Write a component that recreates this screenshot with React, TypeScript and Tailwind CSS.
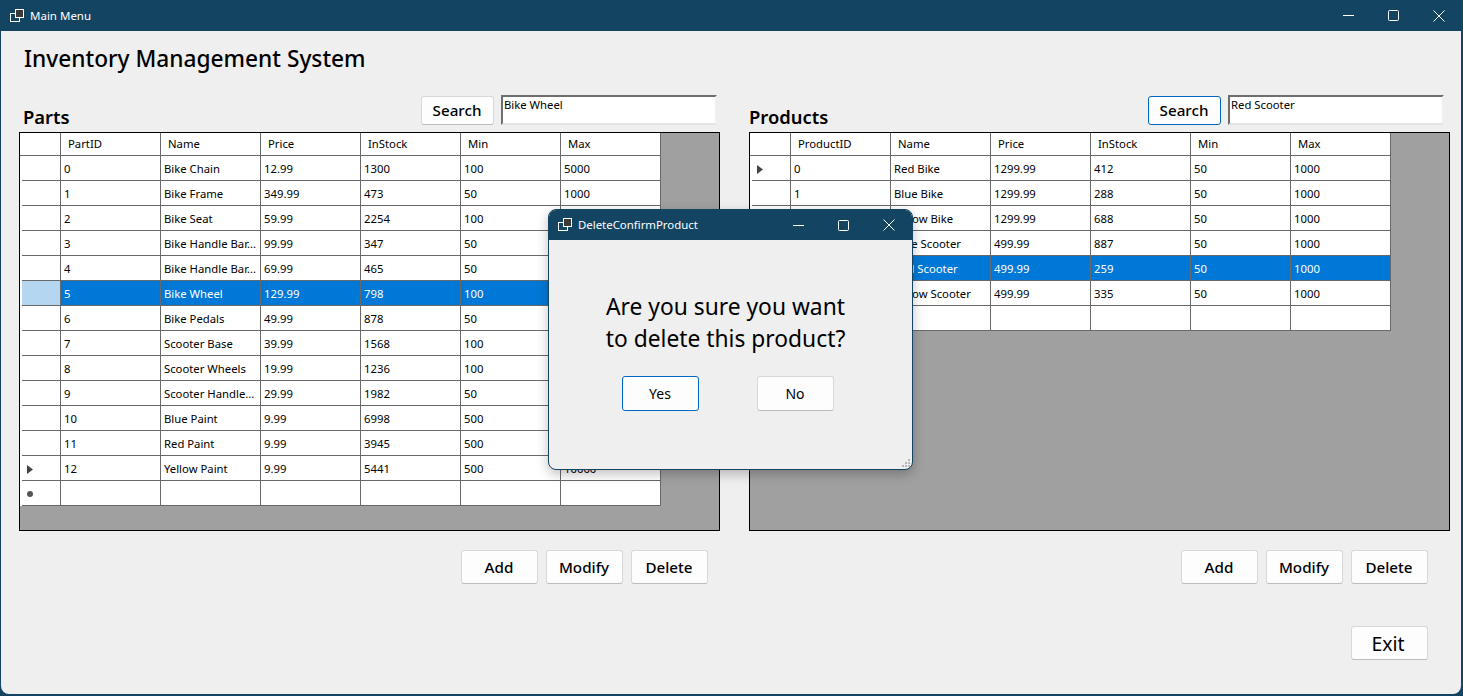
type Row = string[];

const partRows: Row[] = [
    ['0', 'Bike Chain', '12.99', '1300', '100', '5000'],
    ['1', 'Bike Frame', '349.99', '473', '50', '1000'],
    ['2', 'Bike Seat', '59.99', '2254', '100', '5000'],
    ['3', 'Bike Handle Bar...', '99.99', '347', '50', '1000'],
    ['4', 'Bike Handle Bar...', '69.99', '465', '50', '1000'],
    ['5', 'Bike Wheel', '129.99', '798', '100', '5000'],
    ['6', 'Bike Pedals', '49.99', '878', '50', '1000'],
    ['7', 'Scooter Base', '39.99', '1568', '100', '5000'],
    ['8', 'Scooter Wheels', '19.99', '1236', '100', '5000'],
    ['9', 'Scooter Handle...', '29.99', '1982', '50', '1000'],
    ['10', 'Blue Paint', '9.99', '6998', '500', '10000'],
    ['11', 'Red Paint', '9.99', '3945', '500', '10000'],
    ['12', 'Yellow Paint', '9.99', '5441', '500', '10000'],
];

const productRows: Row[] = [
    ['0', 'Red Bike', '1299.99', '412', '50', '1000'],
    ['1', 'Blue Bike', '1299.99', '288', '50', '1000'],
    ['2', 'Yellow Bike', '1299.99', '688', '50', '1000'],
    ['3', 'Blue Scooter', '499.99', '887', '50', '1000'],
    ['4', 'Red Scooter', '499.99', '259', '50', '1000'],
    ['5', 'Yellow Scooter', '499.99', '335', '50', '1000'],
];

function WindowIcon() {
    return (
        <svg width="16" height="16" viewBox="0 0 16 16" fill="none" stroke="white" strokeWidth="1" className="shrink-0">
            <rect x="0.5" y="5.5" width="9" height="8" />
            <rect x="5.5" y="1.5" width="8" height="8" fill="#3a3a3a" />
        </svg>
    );
}

function WindowControls() {
    return (
        <div className="ml-auto flex items-center">
            <div className="flex w-[45px] justify-center">
                <svg width="11" height="11" viewBox="0 0 11 11" stroke="white" fill="none">
                    <path d="M0 5.5H11" />
                </svg>
            </div>
            <div className="flex w-[45px] justify-center">
                <svg width="11" height="11" viewBox="0 0 11 11" stroke="white" fill="none">
                    <rect x="0.5" y="0.5" width="10" height="10" rx="1" />
                </svg>
            </div>
            <div className="flex w-[45px] justify-center">
                <svg width="12" height="12" viewBox="0 0 12 12" stroke="white" fill="none">
                    <path d="M0.5 0.5L11.5 11.5M11.5 0.5L0.5 11.5" />
                </svg>
            </div>
        </div>
    );
}

function Btn({ label, className = '' }: { label: string; className?: string }) {
    return (
        <button className={`flex items-center justify-center rounded-[3px] border bg-[#fdfdfd] text-black ${className}`}>
            {label}
        </button>
    );
}

function Grid({ idHeader, rows, selected, pointer }: { idHeader: string; rows: Row[]; selected: number; pointer: number }) {
    const headers = [idHeader, 'Name', 'Price', 'InStock', 'Min', 'Max'];
    return (
        <div className="h-[399px] w-[701px] border border-black bg-[#a0a0a0] text-[11.3px] text-black">
            <div className="flex h-[23px] w-[641px] bg-white">
                <div className="w-[41px] shrink-0 border-r border-b border-[#696969]" />
                {headers.map((h) => (
                    <div key={h} className="flex w-[100px] items-center border-r border-b border-[#696969] pl-[7px]">
                        {h}
                    </div>
                ))}
            </div>
            {[...rows, null].map((row, i) => {
                const isSel = i === selected;
                return (
                    <div key={i} className={`flex h-[25px] w-[641px] ${isSel ? 'bg-[#0078d7] text-white' : 'bg-white'}`}>
                        <div className="w-[2px] shrink-0 bg-white" />
                        <div
                            className={`flex w-[39px] shrink-0 items-center border-r border-b border-[#696969] pt-[2px] pl-[5px] ${isSel ? 'bg-[#b5d6f0]' : 'bg-white'}`}
                        >
                            {i === pointer && (
                                <svg width="6" height="9" viewBox="0 0 6 9" className="fill-[#444444]">
                                    <path d="M0 0L6 4.5L0 9Z" />
                                </svg>
                            )}
                            {row === null && <span className="size-[6px] rounded-full bg-[#555555]" />}
                        </div>
                        {(row ?? ['', '', '', '', '', '']).map((cell, j) => (
                            <div key={j} className="flex w-[100px] items-center overflow-hidden border-r border-b border-[#696969] pt-[2px] pl-[3px] whitespace-nowrap">
                                {cell}
                            </div>
                        ))}
                    </div>
                );
            })}
        </div>
    );
}

function Panel(props: {
    title: string;
    titleClass: string;
    idHeader: string;
    rows: Row[];
    selected: number;
    pointer: number;
    search: string;
    searchClass: string;
    toolbarClass: string;
    actionsClass: string;
}) {
    return (
        <section className="w-[701px]">
            <div className="flex h-[37px] items-start">
                <h2 className={`mt-[9px] text-[18.4px] leading-[26px] font-semibold ${props.titleClass}`}>{props.title}</h2>
                <div className={`ml-auto flex gap-[7px] ${props.toolbarClass}`}>
                    <Btn label="Search" className={`mt-[1px] h-[29px] w-[73px] pr-[1px] text-[15.2px] font-medium ${props.searchClass}`} />
                    <div className="h-[30px] w-[216px] border-2 border-t-[#6e6e6e] border-r-[#f0f0f0] border-b-[#e3e3e3] border-l-[#6e6e6e] bg-white pl-[1px] text-[11.3px] leading-[15px]">
                        {props.search}
                    </div>
                </div>
            </div>
            <Grid idHeader={props.idHeader} rows={props.rows} selected={props.selected} pointer={props.pointer} />
            <div className={`mt-[19px] flex justify-end gap-[8px] ${props.actionsClass}`}>
                {['Add', 'Modify', 'Delete'].map((a) => (
                    <Btn key={a} label={a} className="h-[34px] w-[77px] border-[#d8d8d8] border-b-[#bdbdbd] pr-[1px] text-[15.2px] font-medium" />
                ))}
            </div>
        </section>
    );
}

function DeleteDialog() {
    return (
        <div className="absolute top-[209px] left-[548px] flex h-[261px] w-[365px] flex-col overflow-hidden rounded-[8px] border border-[#134462] bg-[#efefef] shadow-[0_4px_12px_rgba(0,0,0,0.25)]">
            <div className="flex h-[30px] shrink-0 items-center bg-[#134462] pr-[1px] pl-[9px] text-white">
                <WindowIcon />
                <span className="ml-[4px] text-[11.4px]">DeleteConfirmProduct</span>
                <WindowControls />
            </div>
            <div className="relative flex flex-1 flex-col items-center pr-[10px]">
                <p className="mt-[51px] text-center text-[22.8px] leading-[32px] text-black">
                    Are you sure you want
                    <br />
                    to delete this product?
                </p>
                <div className="mt-[21px] ml-[4px] flex gap-[58px]">
                    <Btn label="Yes" className="h-[35px] w-[77px] border-[#0067c0] text-[14px]" />
                    <Btn label="No" className="h-[35px] w-[77px] border-[#d8d8d8] border-b-[#bdbdbd] text-[14px]" />
                </div>
                <svg width="10" height="10" viewBox="0 0 10 10" className="absolute right-[1px] bottom-[1px] fill-[#b8b8b8]">
                    <path d="M7 1h2v2H7zM4 4h2v2H4zM7 4h2v2H7zM1 7h2v2H1zM4 7h2v2H4zM7 7h2v2H7z" />
                </svg>
            </div>
        </div>
    );
}

export default function App() {
    return (
        <div className="relative flex h-[696px] w-[1463px] flex-col bg-[#134462] pr-[2px] pb-[2px] pl-[1px] font-['Noto_Sans',sans-serif]">
            {/* Title bar */}
            <div className="flex h-[31px] shrink-0 items-center pl-[9px] text-white">
                <WindowIcon />
                <span className="ml-[4px] text-[11.5px]">Main Menu</span>
                <WindowControls />
            </div>

            {/* Main form */}
            <div className="flex-1 rounded-b-[8px] bg-[#efefef] pl-[18px]">
                <h1 className="mt-[11px] ml-[5px] text-[22.7px] leading-[34px] font-medium text-black">Inventory Management System</h1>
                <div className="mt-[19px] flex gap-[29px]">
                    <Panel
                        title="Parts"
                        titleClass="ml-[4px]"
                        idHeader="PartID"
                        rows={partRows}
                        selected={5}
                        pointer={12}
                        search="Bike Wheel"
                        searchClass="border-[#d8d8d8] border-b-[#bdbdbd]"
                        toolbarClass="mr-[3px]"
                        actionsClass="mr-[12px]"
                    />
                    <Panel
                        title="Products"
                        titleClass=""
                        idHeader="ProductID"
                        rows={productRows}
                        selected={4}
                        pointer={0}
                        search="Red Scooter"
                        searchClass="border-[#0067c0]"
                        toolbarClass="mr-[6px]"
                        actionsClass="mr-[22px]"
                    />
                </div>
                <div className="mt-[42px] flex justify-end pr-[33px]">
                    <Btn label="Exit" className="h-[34px] w-[77px] border-[#d8d8d8] border-b-[#bdbdbd] pt-[2px] pr-[3px] text-[19.5px]" />
                </div>
            </div>

            <DeleteDialog />
        </div>
    );
}
